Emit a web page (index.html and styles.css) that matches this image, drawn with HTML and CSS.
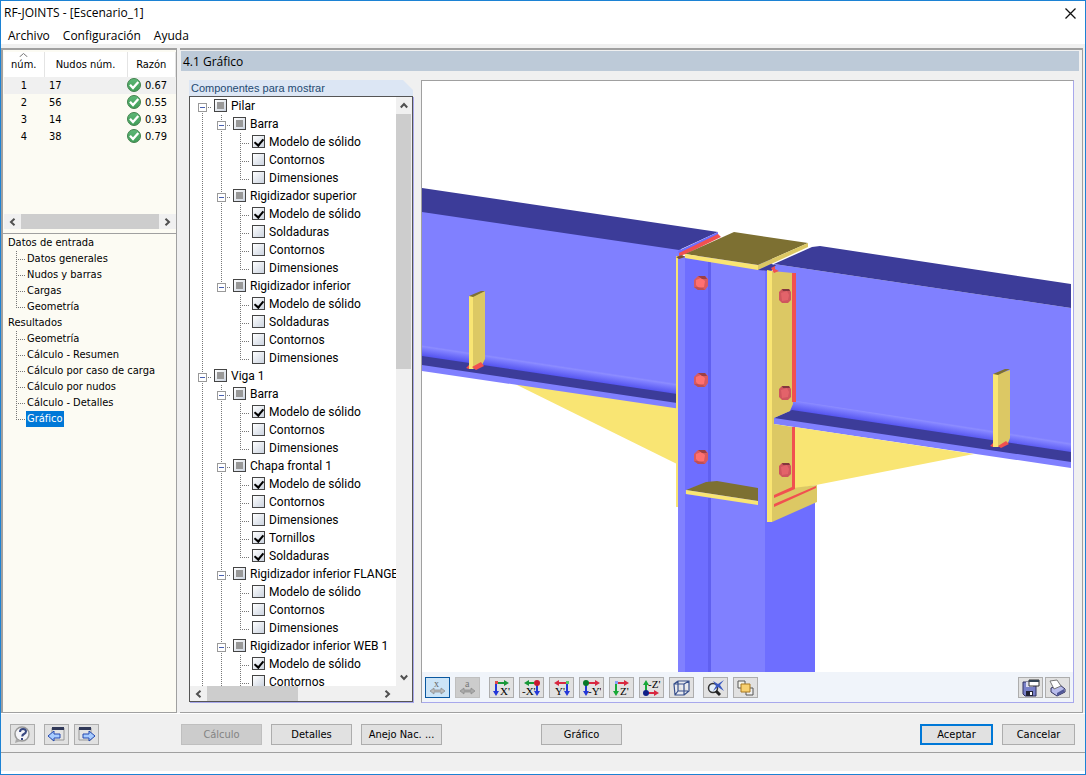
FILE: index.html
```html
<!DOCTYPE html>
<html lang="es">
<head>
<meta charset="utf-8">
<title>RF-JOINTS - [Escenario_1]</title>
<link rel="stylesheet" href="styles.css">
</head>
<body>
<svg class="defs" aria-hidden="true">
  <defs>
    <linearGradient id="okFill" x1="0" y1="0" x2="0" y2="1"><stop offset="0" stop-color="#5fb878"/><stop offset="1" stop-color="#3f9d57"/></linearGradient>
    <symbol id="ok" viewBox="0 0 14 14"><circle cx="7" cy="7" r="6.5" fill="url(#okFill)" stroke="#44824f"/><path d="M3 6.8l3 3.2 5.3-6" fill="none" stroke="#fff" stroke-width="2.3"/></symbol>
    <symbol id="left" viewBox="0 0 7 8"><path d="M5.5 .8L2 4l3.5 3.2" fill="none" stroke="#505050" stroke-width="2"/></symbol>
    <symbol id="right" viewBox="0 0 7 8"><path d="M1.5 .8L5 4 1.500 7.200" fill="none" stroke="#505050" stroke-width="2"/></symbol>
    <symbol id="up" viewBox="0 0 8 7"><path d="M.8 5.500L4 2l3.200 3.500" fill="none" stroke="#505050" stroke-width="2"/></symbol>
    <symbol id="down" viewBox="0 0 8 7"><path d="M.8 1.500L4 5l3.200-3.500" fill="none" stroke="#505050" stroke-width="2"/></symbol>
    <symbol id="arrowR" viewBox="0 0 13 6"><path d="M0 2h8V0l5 3-5 3V4H0z"/></symbol>
    <symbol id="arrowD" viewBox="0 0 6 13"><path d="M2 0v8H0l3 5 3-5H4V0z"/></symbol>
    <g id="bolt"><path d="M-7-3L-3-7H4L7-4V3L4 7H-3L-7 4z" fill="#d95a60"/><path d="M-5-3L0-5 4-2 3 4-2 5-5 2z" fill="#ff7070"/><path d="M-3-7H4L6-4 1-4z" fill="#9c4045"/><path d="M-7 4L-3 7H4L2 5-4 4z" fill="#bd4f54"/></g>
    <g id="sideBolt"><path d="M-6-4L-3-7H4L6-4V4L3 7H-3L-6 4z" fill="#cf565e"/><path d="M-4-3L2-5 4-1 3 4-3 5z" fill="#e3636a"/><path d="M-3-7H4L5-5-2-5z" fill="#83373d"/></g>
  </defs>
</svg>
<div class="window">
  <header class="titlebar">
    <h1>RF-JOINTS - [Escenario_1]</h1>
    <button class="close" aria-label="Cerrar"><svg width="11" height="11" viewBox="0 0 11 11"><path d="M.5.5l10 10M10.500.5l-10 10" stroke="#111" stroke-width="1.300" fill="none"/></svg></button>
  </header>
  <nav class="menu" aria-label="Menú"><button>Archivo</button><button>Configuración</button><button>Ayuda</button></nav>

  <main class="main">
    <aside class="sidebar">
      <div class="results">
        <table>
          <thead><tr><th class="c-num"><svg class="sort" width="9" height="4" viewBox="0 0 9 4"><path d="M.5 4l4-3.500 4 3.500" fill="none" stroke="#777"/></svg>núm.</th><th class="c-node">Nudos núm.</th><th>Razón</th></tr></thead>
          <tbody>
            <tr class="current"><td>1</td><td class="node">17</td><td><span class="ratio"><svg width="14" height="14"><use href="#ok"/></svg>0.67</span></td></tr>
            <tr><td>2</td><td class="node">56</td><td><span class="ratio"><svg width="14" height="14"><use href="#ok"/></svg>0.55</span></td></tr>
            <tr><td>3</td><td class="node">14</td><td><span class="ratio"><svg width="14" height="14"><use href="#ok"/></svg>0.93</span></td></tr>
            <tr><td>4</td><td class="node">38</td><td><span class="ratio"><svg width="14" height="14"><use href="#ok"/></svg>0.79</span></td></tr>
          </tbody>
        </table>
        <div class="hscroll"><button aria-label="Izquierda"><svg width="7" height="8"><use href="#left"/></svg></button><div class="track"><div class="thumb wide"></div></div><button aria-label="Derecha"><svg width="7" height="8"><use href="#right"/></svg></button></div>
      </div>
      <nav class="nav" aria-label="Navegador">
        <h2>Datos de entrada</h2>
        <ul>
          <li><a href="#generales">Datos generales</a></li>
          <li><a href="#nudos">Nudos y barras</a></li>
          <li><a href="#cargas">Cargas</a></li>
          <li><a href="#geometria">Geometría</a></li>
        </ul>
        <h2>Resultados</h2>
        <ul>
          <li><a href="#rgeometria">Geometría</a></li>
          <li><a href="#resumen">Cálculo - Resumen</a></li>
          <li><a href="#caso">Cálculo por caso de carga</a></li>
          <li><a href="#pornudos">Cálculo por nudos</a></li>
          <li><a href="#detalles">Cálculo - Detalles</a></li>
          <li><a href="#grafico" class="active" aria-current="page">Gráfico</a></li>
        </ul>
      </nav>
    </aside>

    <section class="content">
      <h2 class="heading">4.1 Gráfico</h2>
      <div class="panes">
        <section class="components">
          <h3>Componentes para mostrar</h3>
          <div class="treebox">
            <div class="treerow">
              <ul class="tree">
                <li class="node-item"><button class="exp" aria-label="Contraer"></button><label><input type="checkbox" class="mixed">Pilar</label>
                  <ul>
                    <li class="node-item"><button class="exp" aria-label="Contraer"></button><label><input type="checkbox" class="mixed">Barra</label>
                      <ul>
                        <li><label><input type="checkbox" checked>Modelo de sólido</label></li>
                        <li><label><input type="checkbox">Contornos</label></li>
                        <li><label><input type="checkbox">Dimensiones</label></li>
                      </ul></li>
                    <li class="node-item"><button class="exp" aria-label="Contraer"></button><label><input type="checkbox" class="mixed">Rigidizador superior</label>
                      <ul>
                        <li><label><input type="checkbox" checked>Modelo de sólido</label></li>
                        <li><label><input type="checkbox">Soldaduras</label></li>
                        <li><label><input type="checkbox">Contornos</label></li>
                        <li><label><input type="checkbox">Dimensiones</label></li>
                      </ul></li>
                    <li class="node-item"><button class="exp" aria-label="Contraer"></button><label><input type="checkbox" class="mixed">Rigidizador inferior</label>
                      <ul>
                        <li><label><input type="checkbox" checked>Modelo de sólido</label></li>
                        <li><label><input type="checkbox">Soldaduras</label></li>
                        <li><label><input type="checkbox">Contornos</label></li>
                        <li><label><input type="checkbox">Dimensiones</label></li>
                      </ul></li>
                  </ul></li>
                <li class="node-item continues"><button class="exp" aria-label="Contraer"></button><label><input type="checkbox" class="mixed">Viga 1</label>
                  <ul>
                    <li class="node-item"><button class="exp" aria-label="Contraer"></button><label><input type="checkbox" class="mixed">Barra</label>
                      <ul>
                        <li><label><input type="checkbox" checked>Modelo de sólido</label></li>
                        <li><label><input type="checkbox">Contornos</label></li>
                        <li><label><input type="checkbox">Dimensiones</label></li>
                      </ul></li>
                    <li class="node-item"><button class="exp" aria-label="Contraer"></button><label><input type="checkbox" class="mixed">Chapa frontal 1</label>
                      <ul>
                        <li><label><input type="checkbox" checked>Modelo de sólido</label></li>
                        <li><label><input type="checkbox">Contornos</label></li>
                        <li><label><input type="checkbox">Dimensiones</label></li>
                        <li><label><input type="checkbox" checked>Tornillos</label></li>
                        <li><label><input type="checkbox" checked>Soldaduras</label></li>
                      </ul></li>
                    <li class="node-item"><button class="exp" aria-label="Contraer"></button><label><input type="checkbox" class="mixed">Rigidizador inferior FLANGE</label>
                      <ul>
                        <li><label><input type="checkbox">Modelo de sólido</label></li>
                        <li><label><input type="checkbox">Contornos</label></li>
                        <li><label><input type="checkbox">Dimensiones</label></li>
                      </ul></li>
                    <li class="node-item continues"><button class="exp" aria-label="Contraer"></button><label><input type="checkbox" class="mixed">Rigidizador inferior WEB 1</label>
                      <ul>
                        <li><label><input type="checkbox" checked>Modelo de sólido</label></li>
                        <li class="continues"><label><input type="checkbox">Contornos</label></li>
                      </ul></li>
                  </ul></li>
              </ul>
              <div class="vscroll"><button aria-label="Arriba"><svg width="8" height="7"><use href="#up"/></svg></button><div class="track"><div class="thumb tall"></div></div><button aria-label="Abajo"><svg width="8" height="7"><use href="#down"/></svg></button></div>
            </div>
            <div class="hscroll tree-h"><button aria-label="Izquierda"><svg width="7" height="8"><use href="#left"/></svg></button><div class="track"><div class="thumb half"></div></div><button aria-label="Derecha"><svg width="7" height="8"><use href="#right"/></svg></button></div>
          </div>
        </section>

        <section class="viewer">
          <svg class="model" viewBox="422 81 649 591" preserveAspectRatio="xMidYMid slice" role="img" aria-label="Modelo 3D de la unión">
            <defs>
              <linearGradient id="filletL" gradientUnits="userSpaceOnUse" x1="550" y1="364" x2="548.4" y2="374.6"><stop offset="0" stop-color="#8080ff"/><stop offset=".15" stop-color="#8c8cff"/><stop offset=".3" stop-color="#8080ff"/><stop offset="1" stop-color="#5555f0"/></linearGradient>
              <linearGradient id="filletR" gradientUnits="userSpaceOnUse" x1="941" y1="422" x2="939.3" y2="432.800"><stop offset="0" stop-color="#8080ff"/><stop offset=".15" stop-color="#8c8cff"/><stop offset=".3" stop-color="#8080ff"/><stop offset="1" stop-color="#5555f0"/></linearGradient>
            </defs>
            <!-- left beam -->
            <path d="M515 384L677 407V464z" fill="#f9e573"/>
            <path d="M422 211L681 249V409L422 371z" fill="#8080ff"/>
            <path d="M422 188L718 232 679 250 422 212z" fill="#3c3c99"/>
            <path d="M422 345L677 383V395L422 357z" fill="url(#filletL)"/>
            <path d="M422 356L677 394V403L422 365z" fill="#3c3c99"/>
            <path d="M473 296L485 291V359L482 365 473 369z" fill="#dcc864"/>
            <path d="M469 296H473V369H469z" fill="#f9e573"/>
            <path d="M469 296L481 291H485L473 297z" fill="#7d7032"/>
            <path d="M466 368L469 365V369zM472 367L481 362 484 366 476 370z" fill="#f15050"/>
            <!-- right beam -->
            <path d="M774 264L1071 308V468L774 424z" fill="#8080ff"/>
            <path d="M774 264L812 247 820 246 1071 284V308z" fill="#3c3c99"/>
            <path d="M790 400L1071 442V454L790 412z" fill="url(#filletR)"/>
            <path d="M774 418L792 410 1071 452V462z" fill="#3c3c99"/>
            <path d="M998 374L1010 370V438L1008 443 998 447z" fill="#dcc864"/>
            <path d="M993 374H998V447H993z" fill="#f9e573"/>
            <path d="M993 374L1005 369H1010L998 375z" fill="#7d7032"/>
            <path d="M990 446L993 443V447zM998 446L1006 441 1009 444 1001 448z" fill="#f15050"/>
            <path d="M795 427L974 454 816 485 795 489z" fill="#f9e573"/>
            <!-- column -->
            <path d="M676 256H679V507H676z" fill="#f9e573"/>
            <path d="M678 256H772V672H678z" fill="#8080ff"/>
            <path d="M685 258L711 262V482L700 485 685 490zM685 494L711 498V672H685z" fill="#6e6eff"/>
            <path d="M708 261L711 262V482H708zM708 498H711V672H708z" fill="#6060f0"/>
            <path d="M765 268H768V672H765zM765 500H815V672H765z" fill="#6e6eff"/>
            <path d="M678 251L718 232V235L679 254z" fill="#6e6eff"/>
            <path d="M679 253L718 234 721 237 686 254 679 256z" fill="#f15050"/>
            <path d="M676 257L682 255 685 257 679 259z" fill="#7d5032"/>
            <!-- top plate -->
            <path d="M685 254L734 232 808 243 758 265z" fill="#7d7032"/>
            <path d="M685 254L758 265V270L685 258z" fill="#f9e573"/>
            <path d="M758 265L808 243V247L758 270z" fill="#dcc864"/>
            <path d="M758 270L771 264 776 265 771 271z" fill="#3c3c99"/>
            <!-- end plate -->
            <path d="M772 271L793 273V404L790 411 774 418V424L793 427V488L817 485V502L772 522z" fill="#dcc864"/>
            <path d="M767 270L772 271V522H767z" fill="#f9e573"/>
            <path d="M792 273H796V402H792zM792 427H795V489L774 498V495L792 487zM774 504L816 486V488L774 507zM771 268L775 266V269L779 271 774 273z" fill="#f15050"/>
            <!-- lower stiffener -->
            <path d="M686 490L706 482 717 481 758 488V501z" fill="#7d7032"/>
            <path d="M686 490L758 501V505L686 494z" fill="#f9e573"/>
            <use href="#bolt" x="701" y="283"/><use href="#bolt" x="701" y="380"/><use href="#bolt" x="701" y="457"/>
            <use href="#sideBolt" x="785" y="296"/><use href="#sideBolt" x="785" y="393"/><use href="#sideBolt" x="785" y="470"/>
          </svg>
          <div class="toolbar" role="toolbar" aria-label="Vista">
            <div class="tools">
              <button class="tool on" aria-label="Cotas"><svg viewBox="0 0 19 18"><text x="6" y="8" font-size="10" fill="#666">x</text><path d="M2 12l4-3v2h7V9l4 3-4 3v-2H6v2z" fill="#bbb" stroke="#888" stroke-width=".7"/></svg></button>
              <button class="tool off" disabled aria-label="Etiquetas"><svg viewBox="0 0 19 18"><text x="7" y="8" font-size="10" fill="#777">a</text><path d="M2 12l4-3v2h7V9l4 3-4 3v-2H6v2z" fill="#aaa" stroke="#888" stroke-width=".7"/></svg></button>
            </div>
            <div class="tools">
              <button class="tool" aria-label="Vista X"><svg viewBox="0 0 19 18"><use href="#arrowR" x="4" y="1" width="13" height="6" fill="#189838"/><use href="#arrowD" x="1" y="4" width="6" height="13" fill="#2438d8"/><path d="M3 2h3v3H3z" fill="#e04848"/><text x="8" y="16" font-size="11">X'</text></svg></button>
              <button class="tool" aria-label="Vista -X"><svg viewBox="0 0 19 18"><path d="M12 3H7V1L2 4l5 3V5h5z" fill="#189838"/><use href="#arrowD" x="12" y="4" width="6" height="13" fill="#2438d8"/><circle cx="15" cy="4" r="3" fill="#c81830"/><text x="0" y="16" font-size="11">-X'</text></svg></button>
              <button class="tool" aria-label="Vista Y"><svg viewBox="0 0 19 18"><path d="M15 3H7V1L2 4l5 3V5h8z" fill="#d82840"/><use href="#arrowD" x="12" y="4" width="6" height="13" fill="#2438d8"/><path d="M14 2h3v3h-3z" fill="#58c868"/><text x="3" y="16" font-size="11">Y'</text></svg></button>
              <button class="tool" aria-label="Vista -Y"><svg viewBox="0 0 19 18"><use href="#arrowR" x="5" y="1" width="13" height="6" fill="#d82840"/><use href="#arrowD" x="1" y="4" width="6" height="13" fill="#2438d8"/><circle cx="4" cy="4" r="3" fill="#087828"/><text x="6" y="16" font-size="11">-Y'</text></svg></button>
              <button class="tool" aria-label="Vista Z"><svg viewBox="0 0 19 18"><use href="#arrowR" x="4" y="1" width="13" height="6" fill="#d82840"/><use href="#arrowD" x="1" y="4" width="6" height="13" fill="#18a838"/><path d="M3 2h3v3H3z" fill="#88a0f8"/><text x="8" y="16" font-size="11">Z'</text></svg></button>
              <button class="tool" aria-label="Vista -Z"><svg viewBox="0 0 19 18"><use href="#arrowR" x="4" y="11" width="13" height="6" fill="#d82840"/><path d="M3 14V6H1l3-5 3 5H5v8z" fill="#18a838"/><circle cx="4" cy="14" r="3" fill="#102088"/><text x="6" y="9" font-size="11">-Z'</text></svg></button>
              <button class="tool" aria-label="Vista isométrica"><svg viewBox="0 0 19 18"><path d="M2 5h10v11H3zM6 2h11v10l-5 4M2 5l4-3M12 5l5-3M6 2v10h10M6 12l-3 4" fill="#f4f6fc" fill-opacity=".5" stroke="#38508c" stroke-width="1.200"/></svg></button>
            </div>
            <div class="tools">
              <button class="tool" aria-label="Zoom"><svg viewBox="0 0 19 18"><circle cx="7" cy="9" r="4.500" fill="#e4eef8" stroke="#333" stroke-width="1.500"/><path d="M10 12l4 4" stroke="#222" stroke-width="3"/><path d="M7 2l5 3 6-4-4 5 4 6-6-4-5 4 3-5z" fill="#3858c0"/></svg></button>
              <button class="tool" aria-label="Capas"><svg viewBox="0 0 19 18"><path d="M2 2h7v7H2z" fill="#f4f4ec" stroke="#555"/><path d="M10 9h7v7h-7z" fill="#eee" stroke="#555"/><path d="M5 5h9v8H5z" fill="#f8d070" stroke="#a87820"/></svg></button>
            </div>
            <div class="tools end">
              <button class="tool" aria-label="Guardar"><svg viewBox="0 0 19 18"><path d="M2 3h13v14H4l-2-2z" fill="#7880c8" stroke="#303060"/><path d="M5 3h7v5H5z" fill="#dde"/><path d="M5 12h7v5H5z" fill="#223"/><path d="M9 13h2v3H9z" fill="#fff"/><path d="M8 1h10v6H8z" fill="#fff" stroke="#333"/><path d="M8 1h10v2H8z" fill="#345"/></svg></button>
              <button class="tool" aria-label="Imprimir"><svg viewBox="0 0 19 18"><path d="M3 9l9-3 5 4v3l-8 4-6-4z" fill="#b8bcec" stroke="#303060"/><path d="M2 2l7-1 4 6-7 3z" fill="#fff" stroke="#777"/><path d="M9 14l7-4v3l-7 4z" fill="#505898"/></svg></button>
            </div>
          </div>
        </section>
      </div>
    </section>
  </main>

  <footer class="actions">
    <div class="quick">
      <button class="tool help" aria-label="Ayuda"><svg viewBox="0 0 19 18"><circle cx="9" cy="8" r="7" fill="#f4f4f8" stroke="#999" stroke-width="1.500"/><path d="M3 13l-1 4 6-2z" fill="#aaa"/><path d="M7 6q0-3 3-3t3 2.500q0 1.500-2 2.500t-1.500 2.500M9 12v2" fill="none" stroke="#384880" stroke-width="2"/></svg></button>
      <button class="tool" aria-label="Anterior"><svg viewBox="0 0 19 18"><path d="M5 2h12v12H5z" fill="#e4e4e4" stroke="#999"/><path d="M5 1h12v3H5z" fill="#303858"/><path d="M1 10l6-5v3h6v4H7v3z" fill="#a8ccff" stroke="#2448b0"/></svg></button>
      <button class="tool" aria-label="Siguiente"><svg viewBox="0 0 19 18"><path d="M2 2h12v12H2z" fill="#e4e4e4" stroke="#999"/><path d="M2 1h12v3H2z" fill="#303858"/><path d="M18 10l-6-5v3H6v4h6v3z" fill="#a8ccff" stroke="#2448b0"/></svg></button>
    </div>
    <div class="commands">
      <button class="btn" disabled>Cálculo</button>
      <button class="btn">Detalles</button>
      <button class="btn">Anejo Nac. ...</button>
      <button class="btn apart">Gráfico</button>
    </div>
    <div class="confirm"><button class="btn primary">Aceptar</button><button class="btn">Cancelar</button></div>
  </footer>
  <div class="status"></div>
</div>
</body>
</html>
```
FILE: styles.css
```css
* { box-sizing: border-box; }
body { margin: 0; background: #fff; color: #000; font: 12px/18px Roboto, "Open Sans", sans-serif; }
button { font: inherit; color: inherit; border: 0; padding: 0; background: none; }
h1, h2, h3, ul { margin: 0; padding: 0; font-size: inherit; font-weight: normal; }
ul { list-style: none; }
svg { display: block; }
.defs { position: absolute; width: 0; height: 0; }

.window { display: flex; flex-direction: column; height: 100vh; border: 1px solid #1c82d4; background: #f0f0f0; }
.titlebar { display: flex; align-items: center; justify-content: space-between; height: 24px; padding: 0 9px 0 3px; background: #fff; }
.menu { display: flex; gap: 13px; height: 19px; padding: 2px 7px 0; background: #fff; }
.titlebar, .menu, .heading { font-family: "Open Sans", "Noto Sans", sans-serif; }

.main { display: flex; flex: 1; min-height: 0; gap: 3px; margin-top: 4px; padding-right: 2px; }
.sidebar { display: flex; flex-direction: column; width: 176px; border: 1px solid #a0a0a0; border-left-width: 2px; border-top-width: 2px; background: #fcfbf3; font: 11px/16px "DejaVu Sans Condensed", "Open Sans", sans-serif; }
.results { display: flex; flex-direction: column; height: 184px; padding: 2px 0 4px 1px; border-bottom: 1px solid #a0a0a0; }
.results table { width: 100%; border-collapse: collapse; table-layout: fixed; }
.results th { height: 25px; padding: 0; background: #fff; border-right: 1px solid #e4e4e4; font-weight: normal; vertical-align: top; line-height: 16px; padding-top: 5px; }
.results th.c-num { width: 40px; padding-top: 0; }
.c-node { width: 83px; }
.sort { margin: 1px auto 0; }
.results td { height: 17px; padding: 0; text-align: center; line-height: 17px; }
.results td.node { padding-left: 5px; text-align: left; }
.ratio { display: flex; align-items: center; gap: 4px; height: 17px; }
.ratio svg { margin-bottom: 2px; }
.current { background: #f0f0f0; }

.hscroll { display: flex; height: 15px; margin-top: auto; background: #f0f0f0; }
.hscroll button, .vscroll button { display: grid; place-items: center; flex: 0 0 17px; }
.track { flex: 1; }
.thumb { background: #cdcdcd; }
.thumb.wide { width: 100%; height: 15px; }
.thumb.half { width: 53%; height: 15px; }
.thumb.tall { width: 15px; height: 46%; }
.vscroll { display: flex; flex-direction: column; width: 16px; background: #f0f0f0; }
.tree-h { padding-right: 16px; }

.nav { flex: 1; padding: 1px 0 0 5px; }
.nav li { padding-left: 18px; background: repeating-linear-gradient(#777 0 1px, transparent 1px 2px) 8px 0 / 1px 100% no-repeat, repeating-linear-gradient(90deg, #777 0 1px, transparent 1px 2px) 8px 8px / 9px 1px no-repeat; }
.nav li:last-child { background-size: 1px 9px, 9px 1px; }
.nav a { display: inline-block; padding: 0 1px; color: #000; text-decoration: none; }
.nav a.active { background: #0078d7; color: #fff; }

.content { display: flex; flex: 1; flex-direction: column; min-width: 0; padding: 1px 3px 9px 1px; border: 1px solid #a0a0a0; border-left: 0; border-top-width: 2px; }
.heading { height: 20px; padding: 2px 2px 0; background: #bdcad8; }
.panes { display: flex; flex: 1; min-height: 0; gap: 7px; padding: 9px 5px 0 8px; }
.components { display: flex; flex: 0 0 225px; flex-direction: column; min-width: 0; min-height: 0; }
.components h3 { height: 16px; padding-left: 2px; background: #dce6f4; color: #1f4a72; clip-path: polygon(0 0, 214px 0, 224px 10px, 224px 100%, 0 100%); font: 11px/17px "Liberation Sans", Arial, sans-serif; }
.treebox { display: flex; flex: 1; flex-direction: column; min-height: 0; border: 1px solid #555; background: #f0f0f0; box-shadow: 1px 1px #a8a8ec; margin: 0 1px 1px 0; }
.treerow { display: flex; flex: 1; min-height: 0; }
.tree { flex: 1; min-width: 0; padding-left: 8px; overflow: hidden; background: #fff; white-space: nowrap; }
.tree ul { padding-left: 19px; }
.tree li { background: repeating-linear-gradient(#777 0 1px, transparent 1px 2px) 4px 0 / 1px 100% no-repeat, repeating-linear-gradient(90deg, #777 0 1px, transparent 1px 2px) 6px 10px / 8px 1px no-repeat; }
.tree li:last-child { background-size: 1px 11px, 8px 1px; }
.tree li.continues { background-size: 1px 100%, 8px 1px; }
.tree > li:first-child { background-position: 4px 10px, 6px 10px; }
.tree li > label { display: inline-flex; align-items: center; gap: 4px; height: 18px; margin-left: 16px; vertical-align: top; }
.tree .node-item > label { margin-left: 7px; }
.exp { width: 9px; height: 9px; margin-top: 6px; border: 1px solid #999; background: linear-gradient(#4860b0, #4860b0) 1px 3px / 5px 1px no-repeat #fff; vertical-align: top; }
input { appearance: none; width: 13px; height: 13px; margin: 0 0 1px; border: 1px solid #444; background: linear-gradient(135deg, #fff, #ccd4e0); }
input:checked::before { content: ""; display: block; width: 4px; height: 7px; margin: 1px 0 0 3px; border: solid #000; border-width: 0 2px 2px 0; rotate: 40deg; }
input.mixed::before { content: ""; display: block; width: 7px; height: 7px; margin: 2px; background: #999; }

.viewer { display: flex; flex: 1; flex-direction: column; min-width: 0; border: 1px solid #a0a0a0; border-right-color: #a8a8ec; border-bottom-color: #a8a8ec; background: #fff; }
.model { flex: 1; min-height: 0; margin-right: 2px; }
.toolbar { display: flex; gap: 9px; padding: 5px 3px 4px; background: #f0f4fa; }
.tools { display: flex; gap: 5px; }
.tools.end { gap: 2px; margin-left: auto; }
.tool { display: grid; place-items: center; width: 25px; height: 21px; border: 1px solid #adadad; background: #e1e1e1; }
.tool svg { width: 19px; height: 18px; font-family: "Liberation Serif", serif; }
.tool.on { border-color: #0a58a0; background: #cce4f7; }
.tool.off { border-color: #bfbfbf; background: #ccc; }

.actions { display: flex; height: 40px; padding: 10px 9px 0; border-bottom: 1px solid #a0a0a0; border-top: 1px solid #fff; font: 11px/16px "DejaVu Sans Condensed", "Open Sans", sans-serif; }
.quick { display: flex; gap: 5px; width: 171px; }
.help { margin-right: 4px; }
.commands { display: flex; gap: 9px; }
.btn { width: 81px; height: 21px; border: 1px solid #adadad; background: #e1e1e1; }
.btn:disabled { border-color: #bfbfbf; background: #ccc; color: #838383; }
.apart { margin-left: 90px; }
.confirm { display: flex; gap: 9px; margin: 0 1px 0 auto; }
.confirm .btn { width: 73px; }
.btn.primary { border: 2px solid #0078d7; }
.status { height: 21px; border-bottom: 3px solid #fff; }
```
